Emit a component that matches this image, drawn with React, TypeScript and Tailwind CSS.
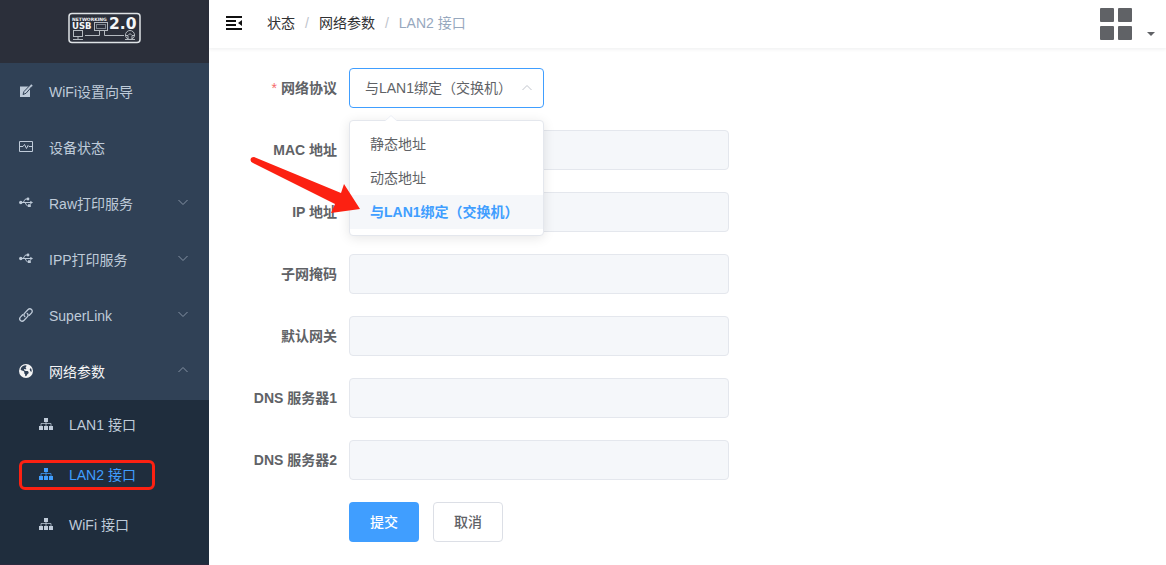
import { useState } from "react";
import type { ReactNode } from "react";
import { FaEarthAmericas } from "react-icons/fa6";

function Logo() {
  return (
    <svg width="74" height="32" viewBox="0 0 74 32" fill="none" stroke="#dfe3e6" role="img" aria-label="Networking USB 2.0">
      <rect x="1" y="1.5" width="71" height="29" rx="3" strokeWidth="1.5" />
      <g fill="#f4f6f7" stroke="none" fontFamily="'DejaVu Sans', sans-serif" fontWeight="700">
        <text x="4" y="9" fontSize="4.500">NETWORKING</text>
        <text x="4" y="17" fontSize="8.500">USB</text>
        <text x="41" y="17" fontSize="15.500">2.0</text>
      </g>
      <g stroke="#b4b9bf" strokeWidth="1">
        <rect x="26.500" y="10.500" width="13" height="8" fill="#2b2f3a" />
        <rect x="28.500" y="12.500" width="9" height="4" stroke="#7d838c" />
        <path d="M31.500 19v4.500H17M36.500 19v4.500H56" />
        <rect x="5.500" y="18.500" width="9" height="6" />
        <path d="M10 25v2M5 27.500h10" />
        <circle cx="62" cy="23" r="4.500" />
        <path d="M57 27.500h10M57 23.500h3l2-2 2 2h3M60 24v3M64 24v3" />
      </g>
    </svg>
  );
}

function EditIcon() {
  return (
    <svg width="14" height="14" viewBox="0 0 14 14">
      <path d="M1 2.500h10v10.500H1z" fill="currentColor" />
      <path d="M4 10.500 5 7.500 11.500 .8 13.200 2.200 7 9.300z" fill="currentColor" stroke="#304156" strokeWidth="1" />
      <path d="M11.800 .8 13.200 2.200" stroke="currentColor" strokeWidth="1.500" />
    </svg>
  );
}

function MonitorIcon() {
  return (
    <svg width="14" height="14" viewBox="0 0 14 14" fill="none" stroke="currentColor">
      <path d="M.5 1.500h13v10H.5z" />
      <path d="M1 6.500h3L5.500 4.500 7.500 8.500 9 5.500 10 6.500h3" />
    </svg>
  );
}

function UsbIcon() {
  return (
    <svg width="14" height="14" viewBox="0 0 14 14" fill="none" stroke="currentColor" strokeWidth="1">
      <path d="M2 6.500h10M3.500 6.500C5.500 6.500 5 3 7 3h1.500M5.500 6.500C7 6.500 7 9.800 8.500 9.800H9.500" />
      <g fill="currentColor" stroke="none">
        <circle cx="1.800" cy="6.500" r="1.700" />
        <circle cx="9" cy="3" r="1.400" />
        <path d="M9 8.300h2.800v2.800H9zM11.300 4.800 14 6.500 11.300 8.200z" />
      </g>
    </svg>
  );
}

function LinkIcon() {
  return (
    <svg width="14" height="14" viewBox="0 0 14 14" fill="none" stroke="currentColor" strokeWidth="1.300" strokeLinecap="round">
      <path d="M5.800 8.600C4.700 7.600 4.800 6.100 5.700 5.100L8.900 1.700C10 .6 11.500 .5 12.500 1.500S13.500 4 12.400 5.100L10.300 7.300" />
      <path d="M8.200 5.400C9.300 6.400 9.200 7.900 8.300 8.900L5.100 12.300C4 13.400 2.500 13.500 1.500 12.500S.5 10 1.600 8.900L3.700 6.700" />
    </svg>
  );
}

function TreeIcon() {
  return (
    <svg width="14" height="14" viewBox="0 0 14 14" fill="currentColor">
      <path d="M5 1h4v4H5zM0 9h4v4H0zM5 9h4v4H5zM10 9h4v4h-4z" />
      <path d="M7 5v4M2 9V6.500h10V9" fill="none" stroke="currentColor" strokeWidth="1" opacity=".75" />
    </svg>
  );
}

function Chevron({ up = false }: { up?: boolean }) {
  return (
    <svg width="10" height="10" viewBox="0 0 10 10" fill="none" stroke="currentColor" strokeWidth="1" aria-hidden="true">
      <path d={up ? "M.5 7 5 2.500 9.500 7" : "M.5 3 5 7.500 9.500 3"} />
    </svg>
  );
}

function MenuItem({ icon, label, arrow, active = false }: { icon: ReactNode; label: string; arrow?: "up" | "down"; active?: boolean }) {
  return (
    <a href="#" className={`flex h-14 items-center pr-[21px] pl-[19px] ${active ? "text-[#f4f4f5]" : "text-[#bfcbd9]"}`}>
      <span className="w-[30px] pb-0.5">{icon}</span>
      <span className="flex-1">{label}</span>
      {arrow && (
        <span className="pb-1 text-[#8492a3]">
          <Chevron up={arrow === "up"} />
        </span>
      )}
    </a>
  );
}

function SubItem({ label, active = false }: { label: string; active?: boolean }) {
  return (
    <a href="#" className={`relative flex h-[50px] items-center pl-[39px] ${active ? "text-[#409eff]" : "text-[#bfcbd9]"}`}>
      <span className="w-[30px] pb-0.5">
        <TreeIcon />
      </span>
      {label}
      {active && <span className="absolute top-[10px] left-[19px] h-[30px] w-[136px] rounded-md border-3 border-[#fc2112]" />}
    </a>
  );
}

const options = ["静态地址", "动态地址", "与LAN1绑定（交换机）"];
const fields = ["MAC 地址", "IP 地址", "子网掩码", "默认网关", "DNS 服务器1", "DNS 服务器2"];
const labelClass = "w-32 shrink-0 text-right font-bold text-[#606266]";

export default function App() {
  const [protocol, setProtocol] = useState(options[2]);

  return (
    <div className="flex min-h-screen bg-white font-['Liberation_Sans','Noto_Sans_CJK_SC',sans-serif] text-sm leading-5">
      <aside className="w-[209px] shrink-0 bg-[#304156]">
        <div className="flex h-[63px] justify-center bg-[#2b2f3a] pt-3">
          <Logo />
        </div>
        <nav className="pt-px">
          <MenuItem icon={<EditIcon />} label="WiFi设置向导" />
          <MenuItem icon={<MonitorIcon />} label="设备状态" />
          <MenuItem icon={<UsbIcon />} label="Raw打印服务" arrow="down" />
          <MenuItem icon={<UsbIcon />} label="IPP打印服务" arrow="down" />
          <MenuItem icon={<LinkIcon />} label="SuperLink" arrow="down" />
          <MenuItem icon={<FaEarthAmericas size={14} />} label="网络参数" arrow="up" active />
          <div className="border-b border-[#2b2a3f] bg-[#1f2d3d] pb-[14px]">
            <SubItem label="LAN1 接口" />
            <SubItem label="LAN2 接口" active />
            <SubItem label="WiFi 接口" />
          </div>
        </nav>
      </aside>

      <div className="min-w-0 flex-1">
        <header className="flex h-12 items-center pr-[11px] pl-4 shadow-[0_1px_4px_rgba(0,21,41,0.08)]">
          <button type="button" aria-label="折叠菜单" className="mr-6 pb-0.5">
            <svg width="18" height="16" viewBox="0 0 18 16" fill="#111">
              <path d="M1 1h16v2H1zM1 5h10v2H1zM1 9h10v2H1zM1 13h16v2H1zM17 5v6l-4-3z" />
            </svg>
          </button>
          <nav aria-label="面包屑" className="flex items-center gap-[10px] pb-0.5 text-[#303133]">
            <a href="#">状态</a>
            <span className="text-[#c0c4cc]">/</span>
            <a href="#">网络参数</a>
            <span className="text-[#c0c4cc]">/</span>
            <span className="text-[#97a8be]">LAN2 接口</span>
          </nav>
          <button type="button" aria-label="应用" className="ml-auto flex items-end gap-[14px]">
            <svg width="34" height="34" viewBox="0 0 34 34" fill="#606266">
              <rect x="1" y="1" width="14" height="14" rx="1" />
              <rect x="19" y="1" width="14" height="14" rx="1" />
              <rect x="1" y="19" width="14" height="14" rx="1" />
              <rect x="19" y="19" width="14" height="14" rx="1" />
            </svg>
            <svg width="8" height="10" viewBox="0 0 8 10" fill="#606266">
              <path d="M0 1h8L4 5z" />
            </svg>
          </button>
        </header>

        <form className="flex max-w-[520px] flex-col gap-[22px] pt-5" onSubmit={(e) => e.preventDefault()}>
          <div className="flex items-center">
            <label htmlFor="protocol" className={labelClass}>
              <span className="mr-1 font-normal text-[#f56c6c]">*</span>网络协议
            </label>
            <div className="relative ml-3 w-[195px]">
              <select
                id="protocol"
                value={protocol}
                onChange={(e) => setProtocol(e.target.value)}
                className="h-10 w-full appearance-none rounded border border-[#409eff] bg-white px-[15px] text-[#606266] outline-none"
              >
                {options.map((o) => (
                  <option key={o}>{o}</option>
                ))}
              </select>
              <span className="pointer-events-none absolute top-[15px] right-3 text-[#c0c4cc]">
                <Chevron up />
              </span>
              <div
                role="listbox"
                aria-label="网络协议"
                className="absolute top-[52px] left-0 z-10 w-full rounded border border-[#e4e7ed] bg-white py-[6px] shadow-[0_2px_12px_rgba(0,0,0,0.1)]"
              >
                <svg className="absolute -top-[6px] left-[35px]" width="12" height="7" viewBox="0 0 12 7">
                  <path d="M0 6 6 0l6 6v1H0z" fill="#fff" />
                  <path d="M0 6 6 .5 12 6" fill="none" stroke="#ebeef5" />
                </svg>
                {options.map((o) => (
                  <button
                    key={o}
                    type="button"
                    role="option"
                    aria-selected={o === protocol}
                    onClick={() => setProtocol(o)}
                    className={`block h-[34px] w-full px-5 text-left whitespace-nowrap ${o === protocol ? "bg-[#f5f7fa] font-bold text-[#409eff]" : "text-[#606266]"}`}
                  >
                    {o}
                  </button>
                ))}
              </div>
              <svg className="pointer-events-none absolute top-[88px] -left-[100px] z-20" width="112" height="60" viewBox="0 0 112 60" fill="#fc2112">
                <path d="M5 1Q1.500 1 1.500 4Q1.500 6 4 7L86 48 82 57 111 53 95 28 92 37Z" />
              </svg>
            </div>
          </div>
          {fields.map((f, i) => (
            <div key={f} className="flex items-center">
              <label htmlFor={`field-${i}`} className={labelClass}>
                {f}
              </label>
              <input
                id={`field-${i}`}
                disabled
                className="ml-3 h-10 min-w-0 flex-1 rounded border border-[#e4e7ed] bg-[#f5f7fa] px-[15px]"
              />
            </div>
          ))}
          <div className="flex gap-[14px] pl-[140px]">
            <button type="submit" className="h-10 w-[70px] rounded bg-[#409eff] font-medium text-white">
              提交
            </button>
            <button type="button" className="h-10 w-[70px] rounded border border-[#dcdfe6] bg-white font-medium text-[#606266]">
              取消
            </button>
          </div>
        </form>
      </div>
    </div>
  );
}
